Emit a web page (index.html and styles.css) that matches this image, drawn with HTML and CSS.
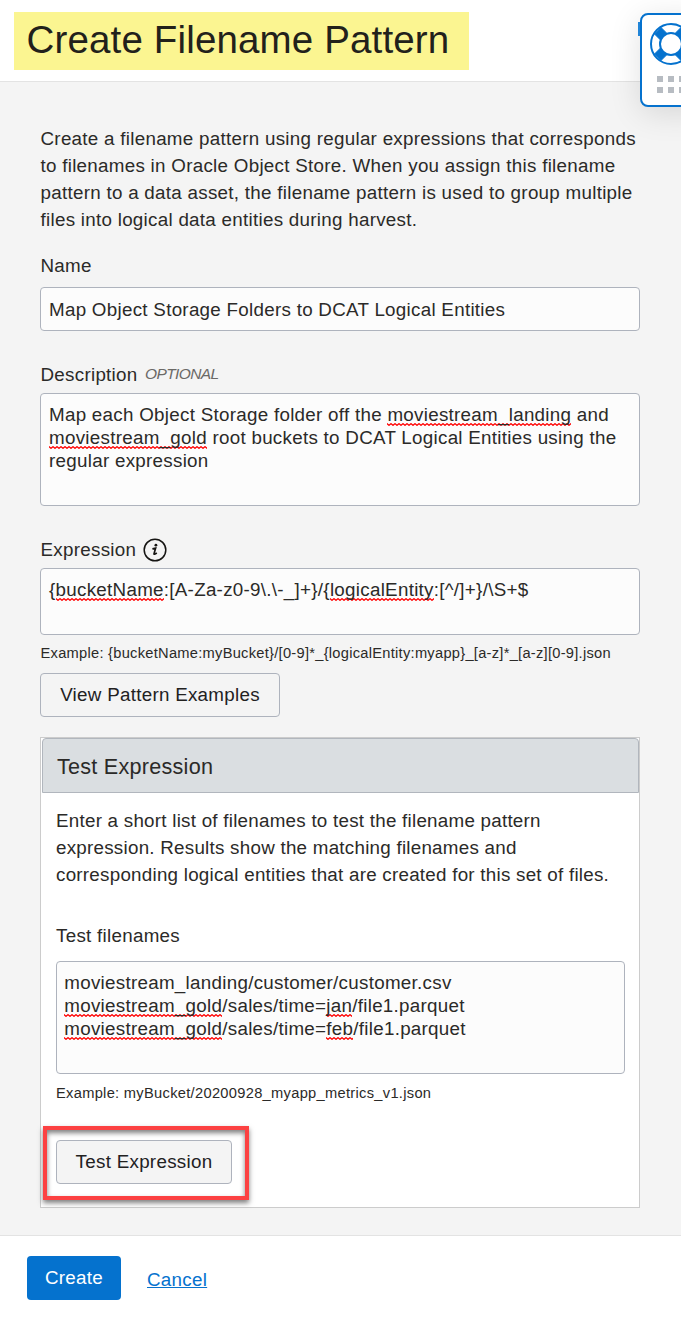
FILE: index.html
```html
<!DOCTYPE html>
<html lang="en">
<head>
<meta charset="utf-8">
<title>Create Filename Pattern</title>
<link rel="stylesheet" href="styles.css">
</head>
<body>
<div class="page">
  <header class="header"><h1 class="title">Create Filename Pattern</h1></header>

  <aside class="help">
    <svg class="help-ring" width="42" height="42" viewBox="0 0 42 42">
      <circle cx="21" cy="21" r="20" fill="#fff" stroke="#0572ce" stroke-width="2"/>
      <path d="M4.5 11L11 4.5L37.5 31L31 37.5Z M31 4.5L37.5 11L11 37.5L4.5 31Z" fill="#0572ce" stroke="#0572ce" stroke-width="1"/>
      <circle cx="21" cy="21" r="11" fill="#fff" stroke="#0572ce" stroke-width="2"/>
    </svg>
    <div class="dots"><i></i><i></i><i></i><i></i><i></i><i></i></div>
  </aside>

  <main class="content">
    <p class="intro">Create a filename pattern using regular expressions that corresponds<br>to filenames in Oracle Object Store. When you assign this filename<br>pattern to a data asset, the filename pattern is used to group multiple<br>files into logical data entities during harvest.</p>

    <div class="label label-name">Name</div>
    <div class="field field-input">Map Object Storage Folders to DCAT Logical Entities</div>

    <div class="label label-desc">Description <em class="optional">OPTIONAL</em></div>
    <div class="field field-area">Map each Object Storage folder off the <span class="sp">moviestream_landing</span> and<br><span class="sp">moviestream_gold</span> root buckets to DCAT Logical Entities using the<br>regular expression</div>

    <div class="label label-expr">Expression
      <svg class="info" width="24" height="24" viewBox="0 0 24 24">
        <circle cx="12" cy="12" r="10.8" fill="none" stroke="#161513" stroke-width="1.5"/>
        <circle cx="12.9" cy="7.2" r="1.4" fill="#161513"/>
        <path d="M9.4 10.9 L12.6 10.2 L11 15.8 Q11 17 13.8 15" fill="none" stroke="#161513" stroke-width="1.7"/>
      </svg>
    </div>
    <div class="field field-expr">{<span class="sp">bucketName</span>:[A-Za-z0-9\.\-_]+}/{<span class="sp">logicalEntity</span>:[^/]+}/\S+$</div>
    <div class="hint hint-expr">Example: {bucketName:myBucket}/[0-9]*_{logicalEntity:myapp}_[a-z]*_[a-z][0-9].json</div>
    <button class="btn btn-view">View Pattern Examples</button>

    <section class="panel">
      <h2 class="panel-head">Test Expression</h2>
      <div class="panel-body">
        <p class="panel-text">Enter a short list of filenames to test the filename pattern<br>expression. Results show the matching filenames and<br>corresponding logical entities that are created for this set of files.</p>
        <div class="label label-test">Test filenames</div>
        <div class="field field-area field-files">moviestream_landing/customer/customer.csv<br><span class="sp">moviestream_gold</span>/sales/time=<span class="sp">jan</span>/file1.parquet<br><span class="sp">moviestream_gold</span>/sales/time=<span class="sp">feb</span>/file1.parquet</div>
        <div class="hint hint-test">Example: myBucket/20200928_myapp_metrics_v1.json</div>
        <div class="marked"><button class="btn btn-test">Test Expression</button></div>
      </div>
    </section>
  </main>

  <footer class="footer">
    <button class="btn btn-create">Create</button>
    <a class="cancel">Cancel</a>
  </footer>
</div>
</body>
</html>
```
FILE: styles.css
```css
* { box-sizing: border-box; }
body {
  margin: 0;
  background: #fff;
  color: #2b2a28;
  font: 18.8px/27px "Liberation Sans", Arial, sans-serif;
  letter-spacing: .28px;
}
.page { position: relative; width: 681px; height: 1317px; overflow: hidden; }
.header { height: 82px; padding: 12px 0 0 14px; border-bottom: 1px solid #e3e3e3; }
.title {
  margin: 0; width: 455px; height: 58px; padding-left: 12.5px;
  background: #fbf591; color: #22211b;
  font-size: 38.5px; line-height: 56px; font-weight: 400; letter-spacing: .15px;
  white-space: nowrap;
}
.help {
  position: absolute; left: 640px; top: 13px; width: 70px; height: 94px;
  padding: 8px; border: 2px solid #0572ce; border-radius: 8px;
  background: #fff; box-shadow: 0 6px 32px rgba(0,0,0,.12);
}
.help::before {
  content: ""; position: absolute; left: -4px; top: 7px; width: 2px; height: 14px; background: #2185d8;
}
.help-ring { display: block; }
.dots { display: grid; grid-template-columns: repeat(3, 6px); gap: 5px; margin: 11px 0 0 7px; }
.dots i { height: 6px; background: #b7bcc2; }
.content { height: 1154px; padding: 43px 41px 0 40px; background: #f4f4f4; border-bottom: 1px solid #e3e3e3; }
.intro, .panel-text { margin: 0; white-space: nowrap; }
.intro { padding-left: .5px; }
.label { display: flex; align-items: center; height: 27px; padding-left: .5px; }
.label-name { margin: 19px 0 8px; }
.label-desc { margin: 30px 0 5px; }
.label-expr { margin: 30px 0 5px; }
.label-test { margin: 34px 0 12px; padding-left: 0; }
.optional { margin: -2px 0 0 7.5px; color: #6b6966; font-size: 15.5px; letter-spacing: -.6px; }
.info { margin-left: 6.5px; }
.field {
  border: 1px solid #aeb3bd; border-radius: 4px; background: #fcfcfc;
  padding: 9px 8px; line-height: 23px; white-space: nowrap;
}
.field-input { height: 44px; padding-top: 10px; }
.field-area { height: 113px; }
.field-files { padding-left: 7.3px; }
.field-expr { height: 67px; }
/* spell-check squiggle */
.sp {
  padding-bottom: 1px;
  background: url("data:image/svg+xml,%3Csvg xmlns='http://www.w3.org/2000/svg' width='4' height='3' viewBox='0 0 4 3'%3E%3Cpath d='M-1 1.5L0 .7L2 2.3L4 .7L5 1.5' fill='none' stroke='red' stroke-width='1.3'/%3E%3C/svg%3E") 0 100% / 4px 3px repeat-x;
}
.hint { padding-left: .5px; font-size: 14.67px; line-height: 20px; letter-spacing: .27px; white-space: nowrap; }
.hint-expr { margin: 8px 0 10px; }
.hint-test { margin-top: 9px; padding-left: 0; letter-spacing: .3px; }
.btn {
  display: block; height: 44px; padding: 0; text-align: center;
  border: 1px solid #aeb3bd; border-radius: 4px; background: #f4f4f4;
  color: #22211f; font: inherit; letter-spacing: inherit; line-height: 42px;
}
.btn-view { width: 240px; }
.panel { height: 471px; margin-top: 20px; border: 1px solid #ccc; background: #fff; }
.panel-head {
  height: 55px; margin: 0 0 0 1px; padding-left: 14px;
  border: 1px solid #b1b6bd; border-radius: 4px 4px 0 0; background: #dadee1;
  font-size: 21.6px; font-weight: 400; line-height: 55px; letter-spacing: .25px;
}
.panel-body { padding: 14px 14px 0 15px; }
.panel-text { letter-spacing: .25px; }
.marked {
  width: 206px; height: 74px; margin: 23px 0 0 -13px; padding: 10px 0 0 9px;
  border: 4px solid #fc4142;
  box-shadow: 0 3px 5px rgba(0,0,0,.5), inset 0 3px 5px rgba(0,0,0,.5);
}
.btn-test { width: 176px; }
.footer { display: flex; padding: 20px 0 0 27px; }
.btn-create { width: 94px; border: 0; background: #0572ce; color: #fff; line-height: 44px; }
.cancel { margin: 10px 0 0 26px; color: #0572ce; text-decoration: underline; }
```
